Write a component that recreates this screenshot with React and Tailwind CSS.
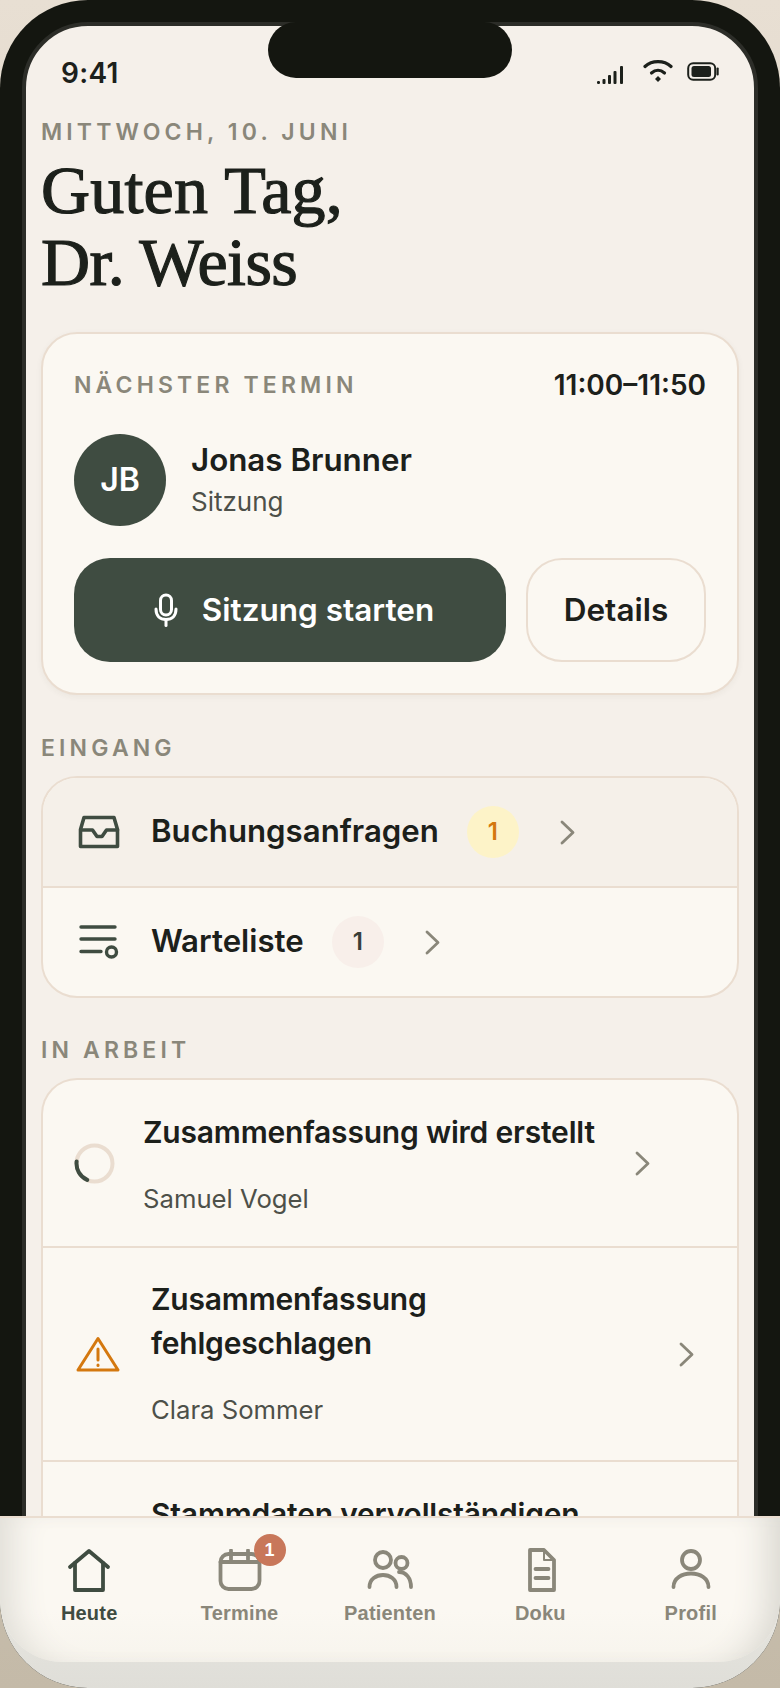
const SANS = "font-['Inter','Noto_Sans',sans-serif]"

function Chevron({ className = '' }) {
    return (
        <svg className={`h-[25px] w-[15px] shrink-0 ${className}`} viewBox="0 0 15 25" fill="none" stroke="#8a877a" strokeWidth="2.8" strokeLinecap="round" strokeLinejoin="round">
            <path d="M2 2l11 10.5L2 23" />
        </svg>
    )
}

function StatusIcons() {
    return (
        <div className="flex items-end">
            <svg className="mb-[5px]" width="28" height="20" viewBox="0 0 28 20" fill="#1c201b">
                <rect x="1" y="16" width="3" height="3" rx="1.2" />
                <rect x="6.500" y="14" width="3" height="5" rx="1" />
                <rect x="12" y="10" width="3" height="9" rx="1" />
                <rect x="17.500" y="6" width="3" height="13" rx="1" />
                <rect x="24" y="1" width="3" height="18" rx="1" />
            </svg>
            <svg className="mb-[7px] ml-[19px]" width="30" height="24" viewBox="0 0 30 24" fill="none" stroke="#1c201b" strokeWidth="3.200" strokeLinecap="round">
                <path d="M2 7.500C9 1 21 1 28 7.500" />
                <path d="M8.500 14c4-3.500 9-3.500 13 0" />
                <path d="M15 17l3 3-3 3-3-3z" fill="#1c201b" stroke="none" />
            </svg>
            <svg className="mb-[9px] ml-[14px]" width="32" height="19" viewBox="0 0 32 19" fill="none">
                <rect x="1.200" y="1.200" width="27" height="16.500" rx="5" stroke="#1c201b" strokeWidth="2" />
                <rect x="4.500" y="4" width="19.500" height="11" rx="2.500" fill="#1c201b" />
                <rect x="29.500" y="5.500" width="2.200" height="8" rx="1" fill="#1c201b" />
            </svg>
        </div>
    )
}

function InboxIcon() {
    return (
        <svg className="shrink-0" width="42" height="34" viewBox="0 0 42 34" fill="none" stroke="#3f4c41" strokeWidth="3.600" strokeLinejoin="round" strokeLinecap="round">
            <path d="M6 2.500h30l3.500 12v17h-37v-17z" />
            <path d="M3 15h11.500l4.500 6.500h5l4.500-6.500h11" />
        </svg>
    )
}

function WaitlistIcon() {
    return (
        <svg className="shrink-0" width="42" height="36" viewBox="0 0 42 36" fill="none" stroke="#3f4c41" strokeWidth="3.400" strokeLinecap="round">
            <path d="M3 3h34M3 15h34M3 27.500h20" />
            <circle cx="33.500" cy="28" r="5" />
        </svg>
    )
}

function Spinner() {
    return (
        <svg className="shrink-0" width="41" height="41" viewBox="0 0 41 41" fill="none" strokeWidth="4">
            <circle cx="20.500" cy="20.500" r="18" stroke="#eaddd0" />
            <path d="M2.600 18.500a18 18 0 0 0 10.600 18.400" stroke="#3f4c41" strokeLinecap="round" />
        </svg>
    )
}

function WarningIcon() {
    return (
        <svg className="shrink-0" width="44" height="36" viewBox="0 0 44 36" fill="none" stroke="#d4780f" strokeWidth="3" strokeLinejoin="round" strokeLinecap="round">
            <path d="M22 2.500L42 34H2z" />
            <path d="M22 13v11" />
            <path d="M22 29v.5" />
        </svg>
    )
}

function InboxRow({ icon, label, count, badge, active }) {
    return (
        <div className={`flex h-[108px] items-center pl-[35px] ${active ? 'bg-[#f5f0e9]' : ''}`}>
            <div className="flex w-[42px] justify-center">{icon}</div>
            <span className="ml-[31px] text-[31.2px] leading-none font-semibold text-[#1c201b]">{label}</span>
            <span className={`ml-[28px] flex h-[52px] w-[52px] items-center justify-center rounded-full text-[24px] font-semibold ${badge}`}>{count}</span>
            <Chevron className="ml-[41px]" />
        </div>
    )
}

function NavItem({ icon, label, active }) {
    return (
        <div className="flex w-[150.4px] flex-col items-center">
            <div className="flex h-[44px] items-center justify-center">{icon}</div>
            <span className={`mt-[9px] font-['Liberation_Sans',Arial,sans-serif] text-[20px] leading-[24px] font-bold tracking-[0.2px] ${active ? 'text-[#3f4c41]' : 'text-[#8a877a]'}`}>{label}</span>
        </div>
    )
}

const SECTION_LABEL = 'text-[23px] leading-[28px] font-semibold tracking-[0.18em] text-[#8a877a]'
const ROW_TITLE = 'text-[30px] leading-[44px] font-semibold tracking-[-0.2px] whitespace-nowrap text-[#1c201b]'
const ROW_SUB = 'mt-[28px] text-[25.7px] leading-[34px] text-[#4d5049]'

export default function App() {
    return (
        <div className={`relative h-[1688px] w-[780px] overflow-hidden bg-[linear-gradient(to_bottom,#e8dfd3,#c4baa8)] ${SANS}`}>
            <div className="h-full rounded-[88px] bg-[#141610] p-[22px]">
                <div className="h-full overflow-hidden rounded-[66px] border-4 border-[#2c2d28] bg-[#f5f0ea]">
                    {/* status bar */}
                    <div className="flex h-[64px] items-end justify-between pr-[35px] pl-[35px]">
                        <span className="text-[28px] leading-[33px] font-semibold tracking-[0.01em] text-[#1c201b]">9:41</span>
                        <StatusIcons />
                    </div>

                    <div className="px-[15px]">
                        <p className={`mt-[28px] ${SECTION_LABEL}`}>MITTWOCH, 10. JUNI</p>
                        <h1 className="mt-[8px] font-['Liberation_Serif',serif] text-[68px] leading-[72px] font-normal tracking-[0.2px] text-[#1c201b] [-webkit-text-stroke:1.2px_#1c201b]">
                            Guten Tag,<br /><span className="tracking-[-0.6px]">Dr. Weiss</span>
                        </h1>

                        {/* next appointment */}
                        <section className="mt-[34px] h-[363px] rounded-[36px] border-2 border-[#eaddd0] bg-[#fbf8f2] px-[31px] pt-[37px] shadow-[0_2px_6px_rgba(60,50,30,0.05)]">
                            <div className="flex items-center justify-between">
                                <span className={SECTION_LABEL}>NÄCHSTER TERMIN</span>
                                <span className="text-[28px] leading-[28px] font-semibold text-[#1c201b]">11:00–11:50</span>
                            </div>
                            <div className="mt-[35px] flex items-center gap-[25px]">
                                <div className="flex h-[92px] w-[92px] items-center justify-center rounded-full bg-[#3f4c41] text-[32px] font-semibold text-white">JB</div>
                                <div>
                                    <p className="text-[31.3px] leading-[40px] font-semibold text-[#1c201b]">Jonas Brunner</p>
                                    <p className="mt-[4px] text-[26px] leading-[36px] text-[#4d5049]">Sitzung</p>
                                </div>
                            </div>
                            <div className="mt-[32px] flex gap-[20px]">
                                <button className="flex h-[104px] w-[432px] items-center justify-center gap-[24px] rounded-[36px] bg-[#3f4c41] pl-[8px] text-[31.5px] font-semibold text-white">
                                    <svg width="24" height="34" viewBox="0 0 24 34" fill="none" stroke="#fff" strokeWidth="3" strokeLinecap="round">
                                        <rect x="6.500" y="2" width="11" height="20" rx="5.500" />
                                        <path d="M2 16c0 7 4 10.500 10 10.500s10-3.500 10-10.500" />
                                        <path d="M12 26.500v6" />
                                    </svg>
                                    Sitzung starten
                                </button>
                                <button className="flex h-[104px] w-[180px] items-center justify-center rounded-[36px] border-2 border-[#eaddd0] text-[31.5px] font-semibold text-[#1c201b]">Details</button>
                            </div>
                        </section>

                        <p className={`mt-[39px] ${SECTION_LABEL}`}>EINGANG</p>
                        <section className="mt-[14px] overflow-hidden rounded-[36px] border-2 border-[#eaddd0] bg-[#fbf8f2]">
                            <InboxRow active icon={<InboxIcon />} label="Buchungsanfragen" count="1" badge="bg-[#fdf3c8] text-[#d4780f]" />
                            <div className="h-[2px] bg-[#eaddd0]" />
                            <InboxRow icon={<WaitlistIcon />} label="Warteliste" count="1" badge="bg-[#f8efea] text-[#3a3f38]" />
                        </section>

                        <p className={`mt-[38px] ${SECTION_LABEL}`}>IN ARBEIT</p>
                        <section className="mt-[14px] overflow-hidden rounded-t-[36px] border-x-2 border-t-2 border-[#eaddd0] bg-[#fbf8f2]">
                            <div className="flex h-[166px] items-center pl-[31px]">
                                <Spinner />
                                <div className="ml-[28px] w-[451px]">
                                    <p className={ROW_TITLE}>Zusammenfassung wird erstellt</p>
                                    <p className={ROW_SUB}>Samuel Vogel</p>
                                </div>
                                <Chevron className="ml-[41px]" />
                            </div>
                            <div className="h-[2px] bg-[#eaddd0]" />
                            <div className="flex h-[212px] items-center pl-[33px]">
                                <WarningIcon />
                                <div className="mb-[4px] ml-[31px] w-[528px]">
                                    <p className={ROW_TITLE}>Zusammenfassung<br />fehlgeschlagen</p>
                                    <p className={ROW_SUB}>Clara Sommer</p>
                                </div>
                                <Chevron />
                            </div>
                            <div className="h-[2px] bg-[#eaddd0]" />
                            <div className="pt-[30px] pl-[108px]">
                                <p className={ROW_TITLE}>Stammdaten vervollständigen</p>
                            </div>
                        </section>
                    </div>
                </div>
            </div>

            {/* dynamic island */}
            <div className="absolute top-[22px] left-[268px] h-[56px] w-[244px] rounded-[28px] bg-[#141610]" />

            {/* bottom nav */}
            <nav className="absolute inset-x-0 bottom-0 h-[172px] overflow-hidden rounded-b-[88px] border-t-2 border-[#eaddd0] bg-[linear-gradient(to_bottom,#efede7,#dfded8)]">
                <div className="absolute inset-x-0 top-0 bottom-[26px] rounded-b-[62px] bg-[linear-gradient(to_bottom,#fbf8f2_65%,#f7f4ed)] shadow-[inset_34px_0_34px_-22px_#dfddd6,inset_-34px_0_34px_-22px_#d9d7d0]" />
                <div className="relative flex px-[14px] pt-[30px]">
                    <NavItem active label="Heute" icon={
                        <svg width="44" height="44" viewBox="0 0 44 44" fill="none" stroke="#3f4c41" strokeWidth="3.800" strokeLinecap="round" strokeLinejoin="round">
                            <path d="M3 19L22 3l19 16" />
                            <path d="M8 15v27h28V15" />
                        </svg>
                    } />
                    <NavItem label="Termine" icon={
                        <div className="relative">
                            <svg width="44" height="42" viewBox="0 0 44 42" fill="none" stroke="#8a877a" strokeWidth="3.800" strokeLinecap="round">
                                <rect x="2.500" y="5" width="39" height="35" rx="8" />
                                <path d="M2.500 13h39M13 1.500v9M30 1.500v9" />
                            </svg>
                            <span className="absolute -top-[15px] -right-[24px] flex h-[32px] w-[32px] items-center justify-center rounded-full bg-[#c8775a] font-['Liberation_Sans',Arial,sans-serif] text-[18px] font-bold text-white">1</span>
                        </div>
                    } />
                    <NavItem label="Patienten" icon={
                        <svg width="46" height="40" viewBox="0 0 46 40" fill="none" stroke="#8a877a" strokeWidth="3.800" strokeLinecap="round">
                            <circle cx="16" cy="10" r="8" />
                            <circle cx="34.500" cy="13" r="6" />
                            <path d="M2.500 37c0-16 27-16 27 0" />
                            <path d="M32 22c7 0 12 6 12 15" />
                        </svg>
                    } />
                    <NavItem label="Doku" icon={
                        <svg className="ml-[3px]" width="30" height="44" viewBox="0 0 30 44" fill="none" stroke="#8a877a" strokeWidth="3.800" strokeLinecap="round" strokeLinejoin="round">
                            <path d="M3 2h14l10 10v30H3z" />
                            <path d="M17 3v9h9" strokeWidth="2" />
                            <path d="M8.500 21h13M8.500 30h13" />
                        </svg>
                    } />
                    <NavItem label="Profil" icon={
                        <svg width="40" height="42" viewBox="0 0 40 42" fill="none" stroke="#8a877a" strokeWidth="3.800" strokeLinecap="round">
                            <circle cx="20" cy="11" r="9" />
                            <path d="M2.500 38c0-18 35-18 35 0" />
                        </svg>
                    } />
                </div>
            </nav>
        </div>
    )
}
